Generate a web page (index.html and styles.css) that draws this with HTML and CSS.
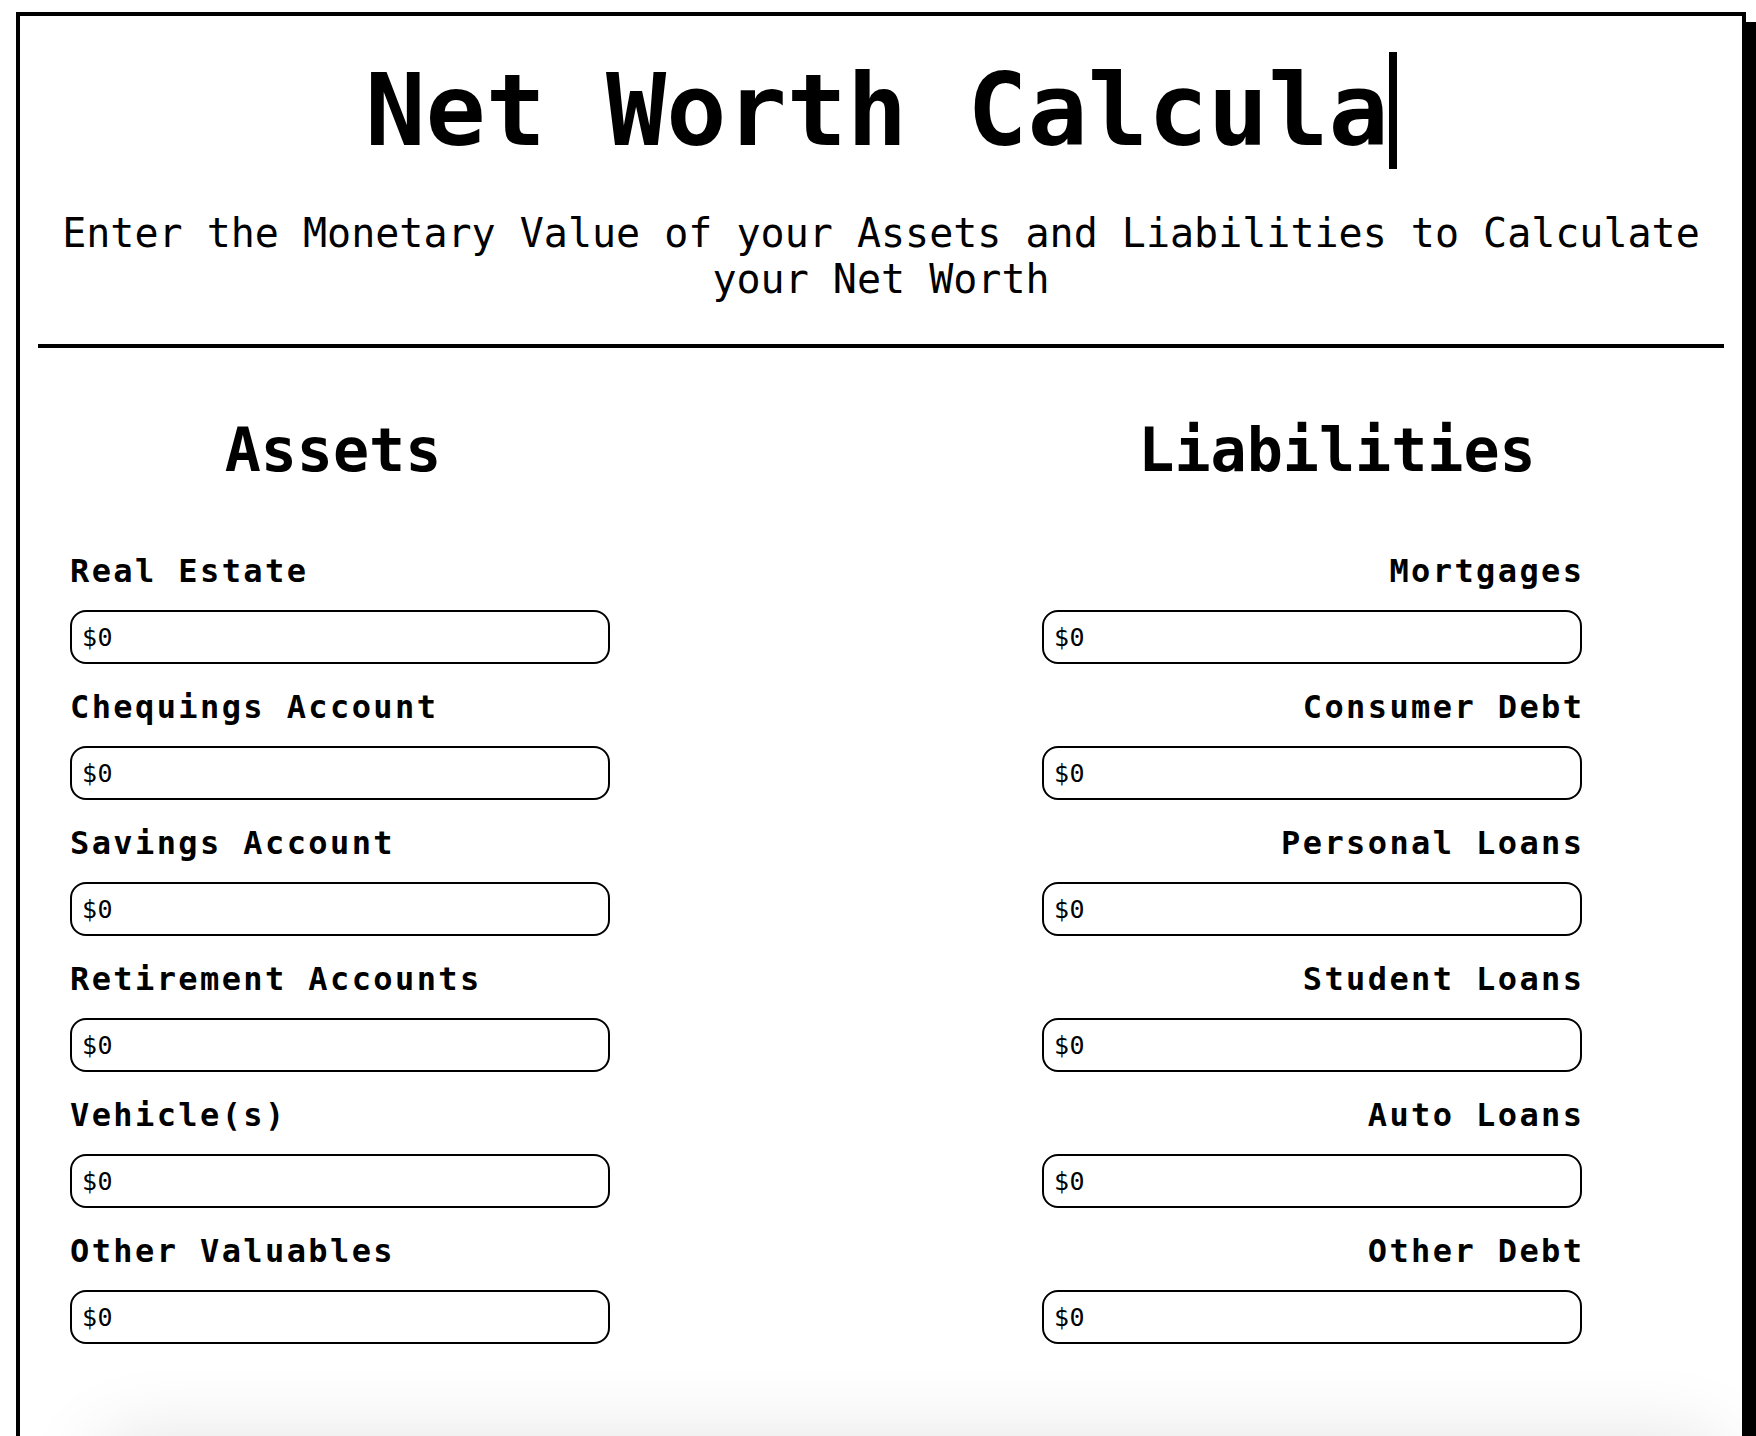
FILE: index.html
```html
<!DOCTYPE html>
<html lang="en">
<head>
<meta charset="utf-8">
<title>Net Worth Calculator</title>
<link rel="stylesheet" href="styles.css">
</head>
<body>
<main class="frame">
  <h1 class="title">Net Worth Calcula</h1>
  <p class="intro">Enter the Monetary Value of your Assets and Liabilities to Calculate your Net Worth</p>
  <hr class="rule">
  <section class="columns">
    <div class="col col-assets">
      <h2 class="col-title">Assets</h2>
      <div class="field"><label class="field-label" for="a1">Real Estate</label><input class="field-input" id="a1" type="text" value="$0"></div>
      <div class="field"><label class="field-label" for="a2">Chequings Account</label><input class="field-input" id="a2" type="text" value="$0"></div>
      <div class="field"><label class="field-label" for="a3">Savings Account</label><input class="field-input" id="a3" type="text" value="$0"></div>
      <div class="field"><label class="field-label" for="a4">Retirement Accounts</label><input class="field-input" id="a4" type="text" value="$0"></div>
      <div class="field"><label class="field-label" for="a5">Vehicle(s)</label><input class="field-input" id="a5" type="text" value="$0"></div>
      <div class="field"><label class="field-label" for="a6">Other Valuables</label><input class="field-input" id="a6" type="text" value="$0"></div>
    </div>
    <div class="col col-liabilities">
      <h2 class="col-title">Liabilities</h2>
      <div class="field"><label class="field-label" for="l1">Mortgages</label><input class="field-input" id="l1" type="text" value="$0"></div>
      <div class="field"><label class="field-label" for="l2">Consumer Debt</label><input class="field-input" id="l2" type="text" value="$0"></div>
      <div class="field"><label class="field-label" for="l3">Personal Loans</label><input class="field-input" id="l3" type="text" value="$0"></div>
      <div class="field"><label class="field-label" for="l4">Student Loans</label><input class="field-input" id="l4" type="text" value="$0"></div>
      <div class="field"><label class="field-label" for="l5">Auto Loans</label><input class="field-input" id="l5" type="text" value="$0"></div>
      <div class="field"><label class="field-label" for="l6">Other Debt</label><input class="field-input" id="l6" type="text" value="$0"></div>
    </div>
  </section>
  <section class="result"></section>
</main>
</body>
</html>
```
FILE: styles.css
```css
* {
  box-sizing: border-box;
}

html, body {
  margin: 0;
  padding: 0;
  background: #fff;
  color: #000;
  font-family: "DejaVu Sans Mono", "Liberation Mono", monospace;
}

.frame {
  margin: 12px 10px 0 16px;
  border: 4px solid #000;
  box-shadow: 10px 10px 0 #000;
  padding: 0 18px 40px;
  background: #fff;
}

.title {
  box-sizing: content-box;
  width: 17ch;
  margin: 36px auto 0;
  font-size: 100px;
  font-weight: bold;
  line-height: normal;
  white-space: nowrap;
  overflow: hidden;
  border-right: 8px solid #000;
  text-align: left;
}

.intro {
  margin: 41px 0 0;
  font-size: 40px;
  line-height: normal;
  text-align: center;
}

.rule {
  height: 4px;
  margin: 42px 0 0;
  border: 0;
  background: #000;
}

.columns {
  display: grid;
  grid-template-columns: 540px 540px;
  column-gap: 432px;
  padding-left: 32px;
  margin-top: 67px;
}

.col-title {
  margin: 0 0 68px;
  font-size: 60px;
  font-weight: bold;
  line-height: normal;
  text-align: center;
}

.col-assets .col-title {
  margin-right: 14px;
}

.col-liabilities .col-title {
  margin-left: 50px;
}

.field {
  display: flex;
  flex-direction: column;
  margin-bottom: 25px;
}

.field-label {
  font-size: 32px;
  font-weight: bold;
  line-height: 37px;
  letter-spacing: 2.4px;
  margin-bottom: 20px;
}

.col-liabilities .field-label {
  text-align: right;
  margin-right: -2.4px;
}

.field-input {
  width: 540px;
  height: 54px;
  padding: 0 10px;
  border: 2px solid #000;
  border-radius: 16px;
  background: #fff;
  color: #000;
  font-family: "DejaVu Sans Mono", "Liberation Mono", monospace;
  font-size: 25px;
  letter-spacing: 0.5px;
  outline: none;
}

.result {
  height: 220px;
  margin: 71px 0 0 60px;
  border-radius: 30px;
  background: #fff;
  box-shadow: 0 0 80px rgba(0, 0, 0, 0.12);
}
```
